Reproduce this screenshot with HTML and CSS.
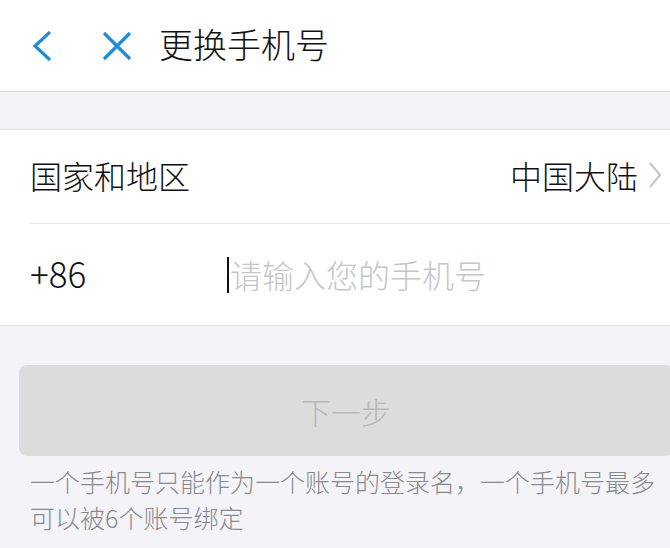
FILE: index.html
```html
<!DOCTYPE html>
<html lang="zh">
<head>
<meta charset="utf-8">
<link rel="stylesheet" href="styles.css">
</head>
<body>
<div class="page">
  <header class="nav">
    <span class="icon back">
      <svg width="22" height="30" viewBox="0 0 22 30"><path d="M19 1 L4 15 L19 29" fill="none" stroke="#1d8ce0" stroke-width="3.2"/></svg>
    </span>
    <span class="icon close">
      <svg width="30" height="30" viewBox="0 0 30 30"><path d="M2 2 L28 28 M28 2 L2 28" fill="none" stroke="#1d8ce0" stroke-width="3.2"/></svg>
    </span>
    <h1 class="title">更换手机号</h1>
  </header>
  <div class="gap"></div>
  <section class="group">
    <div class="row region">
      <span class="label">国家和地区</span>
      <span class="value">中国大陆
        <svg class="chev" width="14" height="26" viewBox="0 0 14 26"><path d="M2 1 L12 13 L2 25" fill="none" stroke="#c4c4c8" stroke-width="2"/></svg>
      </span>
    </div>
    <div class="row phone">
      <span class="code">+86</span>
      <span class="input"><span class="caret"></span><span class="placeholder">请输入您的手机号</span></span>
    </div>
  </section>
  <div class="actions">
    <div class="btn">下一步</div>
    <p class="note">一个手机号只能作为一个账号的登录名，一个手机号最多可以被6个账号绑定</p>
  </div>
</div>
</body>
</html>
```

FILE: styles.css
```css
html, body {
  margin: 0;
  padding: 0;
  background: #f4f4f8;
  overflow: hidden;
}
body {
  font-family: "Noto Sans CJK SC", "Noto Sans", sans-serif;
  font-weight: 300;
  width: 670px;
  height: 548px;
}
.page {
  width: 692px;
}
.nav {
  height: 91px;
  background: #fff;
  border-bottom: 1px solid #dcdce0;
  display: flex;
  align-items: center;
}
.icon {
  display: flex;
  align-items: center;
}
.back {
  margin-left: 31px;
}
.close {
  margin-left: 49px;
}
.title {
  margin: 0 0 0 27px;
  font-size: 34px;
  font-weight: 300;
  color: #111;
  line-height: 1;
  position: relative;
  top: -2px;
}
.gap {
  height: 37px;
  border-bottom: 1px solid #e2e2e6;
}
.group {
  background: #fff;
  border-bottom: 1px solid #e2e2e6;
  padding-left: 30px;
}
.row {
  display: flex;
  align-items: center;
  font-size: 32px;
  color: #111;
}
.region {
  height: 93px;
  border-bottom: 1px solid #e6e6ea;
  justify-content: space-between;
  padding-right: 30px;
}
.label,
.value {
  position: relative;
  top: -2px;
}
.value {
  display: flex;
  align-items: center;
}
.chev {
  margin-left: 10px;
}
.phone {
  height: 101px;
}
.code {
  width: 197px;
  font-size: 35px;
  position: relative;
  top: -2px;
}
.input {
  display: flex;
  align-items: center;
}
.caret {
  width: 2px;
  height: 36px;
  background: #111;
  margin-right: 1px;
}
.placeholder {
  color: #c6c6ca;
  font-size: 32px;
  position: relative;
  top: -1px;
}
.actions {
  padding: 39px 19px 0 19px;
}
.btn {
  height: 91px;
  border-radius: 8px;
  background: #dcdcdc;
  color: #b9b9b9;
  font-size: 30px;
  display: flex;
  align-items: center;
  justify-content: center;
}
.note {
  margin: 7px 0 0 11px;
  width: 628px;
  font-size: 25px;
  line-height: 36px;
  color: #8a8a8e;
}
```
